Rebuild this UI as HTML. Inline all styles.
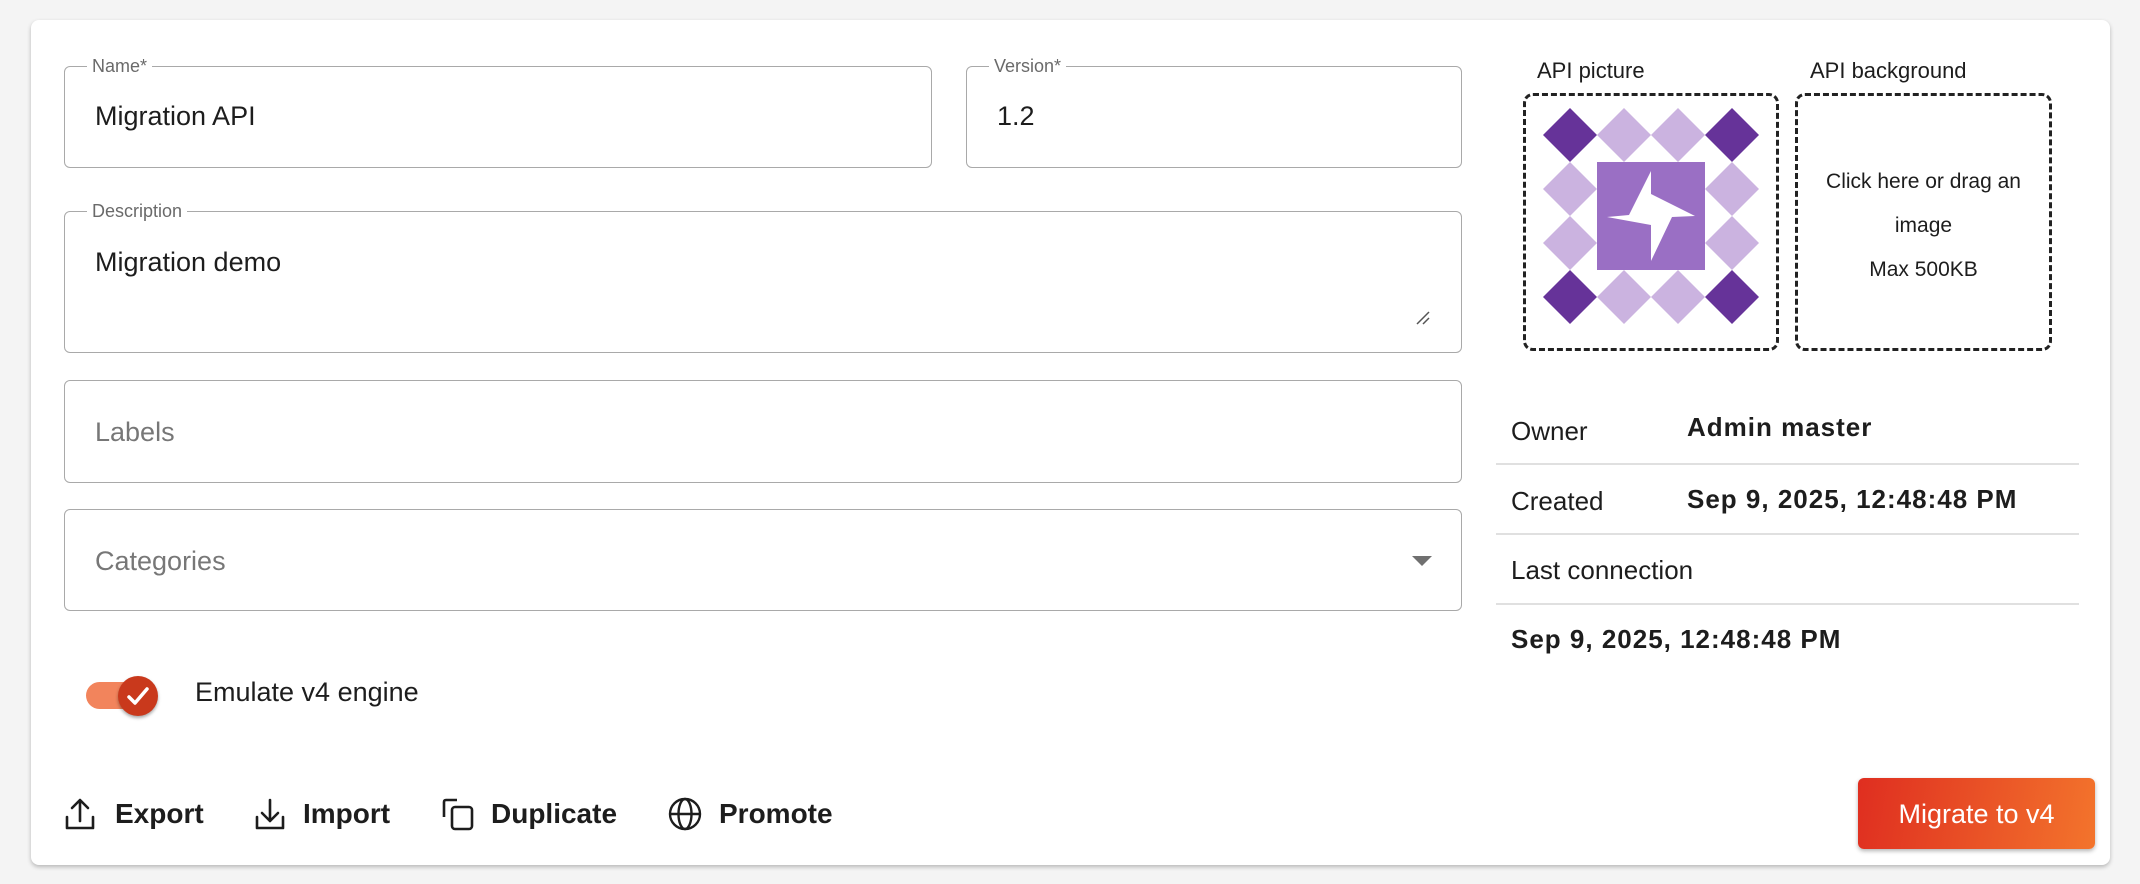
<!DOCTYPE html>
<html><head><meta charset="utf-8"><style>
*{box-sizing:border-box;margin:0;padding:0}
body{width:2140px;height:884px;background:#f4f4f4;font-family:"Liberation Sans",sans-serif;color:#1d1d1d;position:relative;overflow:hidden}
.card{position:absolute;left:31px;top:20px;width:2079px;height:845px;background:#fff;border-radius:8px;box-shadow:0 2px 4px rgba(0,0,0,.25)}
.f{position:absolute;border:1.5px solid #a9a9a9;border-radius:6px}
.f .lb{position:absolute;top:-12px;left:22px;background:#fff;padding:0 5px;font-size:18px;color:#6a6a6a;line-height:22px}
.f .v{position:absolute;left:30px;font-size:27px;line-height:32px}
.ph{color:#777}
.abs{position:absolute}
.row{position:absolute;left:1496px;width:583px;border-bottom:2px solid #e0e0e0}
.t{position:absolute;font-size:26px;line-height:30px}
.b{font-weight:bold;letter-spacing:1px}
.act{position:absolute;top:798px;font-size:28px;line-height:32px;font-weight:bold;color:#1d1d1d}
</style></head><body>
<div class="card"></div>
<div class="f" style="left:64px;top:66px;width:868px;height:102px"><span class="lb">Name*</span><span class="v" style="top:33px">Migration API</span></div>
<div class="f" style="left:966px;top:66px;width:496px;height:102px"><span class="lb">Version*</span><span class="v" style="top:33px">1.2</span></div>
<div class="f" style="left:64px;top:211px;width:1398px;height:142px"><span class="lb">Description</span><span class="v" style="top:34px">Migration demo</span>
<svg class="abs" style="right:30px;bottom:26px" width="16" height="16"><path d="M2 14L14 2M8 14L14 8" stroke="#555" stroke-width="1.5"/></svg></div>
<div class="f" style="left:64px;top:380px;width:1398px;height:103px"><span class="v ph" style="top:35px">Labels</span></div>
<div class="f" style="left:64px;top:509px;width:1398px;height:102px"><span class="v ph" style="top:35px">Categories</span>
<svg class="abs" style="left:1347px;top:46px" width="20" height="11"><path d="M0 0H20L10 10Z" fill="#707070"/></svg></div>

<div class="abs" style="left:86px;top:682px;width:68px;height:27px;border-radius:14px;background:#f2845c"></div>
<div class="abs" style="left:118px;top:676px;width:40px;height:40px;border-radius:50%;background:#c9391c;box-shadow:0 2px 3px rgba(0,0,0,.35)"></div>
<svg class="abs" style="left:118px;top:676px" width="40" height="40"><path d="M11 21L17 27L29 13" stroke="#fff" stroke-width="3.5" fill="none" stroke-linecap="round" stroke-linejoin="round"/></svg>
<div class="t" style="left:195px;top:677px;font-size:27px">Emulate v4 engine</div>

<svg class="abs" style="left:64px;top:797px" width="32" height="34" fill="none" stroke="#1d1d1d" stroke-width="2.6" stroke-linecap="round" stroke-linejoin="round"><path d="M3 20V31H29V20M16 24V3M8 11L16 3L24 11"/></svg>
<div class="act" style="left:115px">Export</div>
<svg class="abs" style="left:254px;top:797px" width="32" height="34" fill="none" stroke="#1d1d1d" stroke-width="2.6" stroke-linecap="round" stroke-linejoin="round"><path d="M3 20V31H29V20M16 3V24M8 16L16 24L24 16"/></svg>
<div class="act" style="left:303px">Import</div>
<svg class="abs" style="left:441px;top:797px" width="34" height="34" fill="none" stroke="#1d1d1d" stroke-width="2.6" stroke-linejoin="round"><path d="M16 3H5Q3 3 3 5V20"/><rect x="11" y="10" width="20" height="22" rx="3"/></svg>
<div class="act" style="left:491px">Duplicate</div>
<svg class="abs" style="left:668px;top:797px" width="34" height="34" fill="none" stroke="#1d1d1d" stroke-width="2.4"><circle cx="17" cy="17" r="15"/><ellipse cx="17" cy="17" rx="6.5" ry="15"/><path d="M2 17H32"/></svg>
<div class="act" style="left:719px">Promote</div>

<div class="abs" style="left:1858px;top:778px;width:237px;height:71px;border-radius:6px;background:linear-gradient(100deg,#df2e20,#f3742c);box-shadow:0 2px 4px rgba(0,0,0,.3);color:#fff;font-size:27px;line-height:73px;text-align:center">Migrate to v4</div>

<div class="t" style="left:1537px;top:56px;font-size:22px">API picture</div>
<div class="t" style="left:1810px;top:56px;font-size:22px">API background</div>
<div class="abs" style="left:1523px;top:93px;width:256px;height:258px;border:3.5px dashed #222;border-radius:10px"></div>
<div class="abs" style="left:1795px;top:93px;width:257px;height:258px;border:3.5px dashed #222;border-radius:10px;text-align:center;font-size:21px;line-height:44px;padding-top:64px">Click here or drag an<br>image<br>Max 500KB</div>
<svg class="abs" style="left:0;top:0" width="2140" height="884">
<g fill="#cbb3e0">
<path d="M1624 108l27 27-27 27-27-27z"/><path d="M1678 108l27 27-27 27-27-27z"/>
<path d="M1570 162l27 27-27 27-27-27z"/><path d="M1732 162l27 27-27 27-27-27z"/>
<path d="M1570 216l27 27-27 27-27-27z"/><path d="M1732 216l27 27-27 27-27-27z"/>
<path d="M1624 270l27 27-27 27-27-27z"/><path d="M1678 270l27 27-27 27-27-27z"/>
</g>
<g fill="#663399">
<path d="M1570 108l27 27-27 27-27-27z"/><path d="M1732 108l27 27-27 27-27-27z"/>
<path d="M1570 270l27 27-27 27-27-27z"/><path d="M1732 270l27 27-27 27-27-27z"/>
</g>
<rect x="1597" y="162" width="108" height="108" fill="#9a6fc4"/>
<path d="M1651 171L1651 194L1695 216L1672 217L1651 261L1651 225L1607 217L1629 215Z" fill="#fff"/>
</svg>

<div class="row" style="top:395px;height:70px"></div>
<div class="row" style="top:465px;height:70px"></div>
<div class="row" style="top:535px;height:70px"></div>
<div class="t" style="left:1511px;top:416px">Owner</div>
<div class="t b" style="left:1687px;top:412px">Admin master</div>
<div class="t" style="left:1511px;top:486px">Created</div>
<div class="t b" style="left:1687px;top:484px">Sep 9, 2025, 12:48:48 PM</div>
<div class="t" style="left:1511px;top:555px">Last connection</div>
<div class="t b" style="left:1511px;top:624px">Sep 9, 2025, 12:48:48 PM</div>
</body></html>
